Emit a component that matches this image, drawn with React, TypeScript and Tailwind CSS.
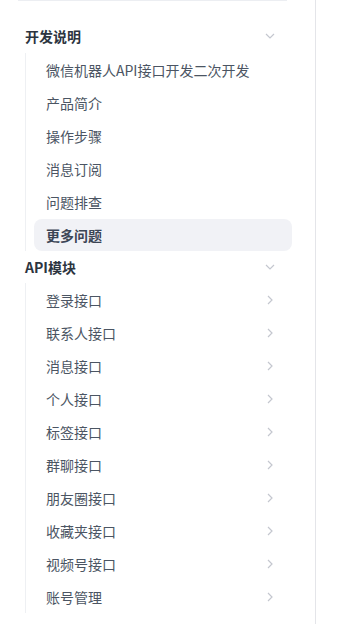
import React from 'react';

const devItems = ['微信机器人API接口开发二次开发', '产品简介', '操作步骤', '消息订阅', '问题排查', '更多问题'];
const apiItems = ['登录接口', '联系人接口', '消息接口', '个人接口', '标签接口', '群聊接口', '朋友圈接口', '收藏夹接口', '视频号接口', '账号管理'];

const ChevronDown = () => (
  <svg width="10" height="6" viewBox="0 0 10 6" fill="none" stroke="#c4c7cf" strokeWidth="1.2">
    <path d="M1 1l4 4 4-4" />
  </svg>
);

const ChevronRight = () => (
  <svg width="6" height="10" viewBox="0 0 6 10" fill="none" stroke="#c4c7cf" strokeWidth="1.2">
    <path d="M1 1l4 4-4 4" />
  </svg>
);

const Header: React.FC<{ title: string; tall?: boolean }> = ({ title, tall }) => (
  <div className={`flex items-center justify-between pl-[25px] pr-[40px] ${tall ? 'h-[34px]' : 'h-8'}`}>
    <span className="text-[14px] font-bold text-[#2c3440]">{title}</span>
    <ChevronDown />
  </div>
);

export default function App() {
  return (
    <div
      className="h-[624px] w-[316px] border-r border-[#e4e5e9] bg-white"
      style={{ fontFamily: '"Noto Sans CJK SC", "Noto Sans", sans-serif' }}
    >
      <div className="ml-[18px] mr-[28px] h-px bg-[#eceef2]" />
      <div className="pt-[18px]">
        <Header title="开发说明" tall />
        <div className="ml-[25px] mr-[23px] flex flex-col gap-px border-l border-[#eef0f3] pl-2 pt-px">
          {devItems.map((t, i) => (
            <div
              key={t}
              className={`flex h-8 items-center rounded-lg px-3 text-[14px] ${
                i === devItems.length - 1 ? 'bg-[#f1f2f6] font-bold text-[#3c4555]' : 'text-[#4b5563]'
              }`}
            >
              {t}
            </div>
          ))}
        </div>
        <Header title="API模块" />
        <div className="ml-[25px] mr-[23px] flex flex-col gap-px border-l border-[#eef0f3] pl-2 pt-px">
          {apiItems.map(t => (
            <div key={t} className="flex h-8 items-center justify-between pl-3 pr-[19px] text-[14px] text-[#4b5563]">
              <span>{t}</span>
              <ChevronRight />
            </div>
          ))}
        </div>
      </div>
    </div>
  );
}
